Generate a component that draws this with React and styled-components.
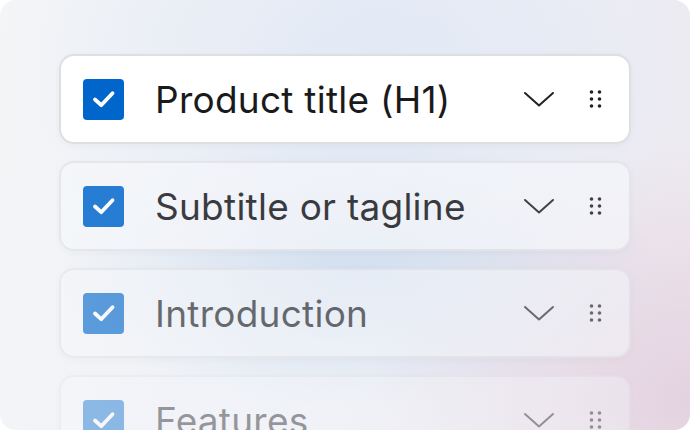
import React from "react";
import styled, { createGlobalStyle } from "styled-components";

const Global = createGlobalStyle`
  html, body { margin: 0; padding: 0; background: #ffffff; }
  body { font-family: Inter, "Noto Sans", sans-serif; }
`;

const Frame = styled.div`
  width: 690px;
  height: 430px;
  border-radius: 16px;
  overflow: hidden;
  box-sizing: border-box;
  padding: 54px 59px 0 59px;
  background:
    radial-gradient(ellipse 300px 140px at 360px 270px, rgba(190, 210, 235, 0.55), rgba(190, 210, 235, 0) 100%),
    radial-gradient(ellipse 320px 260px at 690px 400px, rgba(226, 208, 222, 0.9), rgba(226, 208, 222, 0) 100%),
    radial-gradient(ellipse 380px 240px at 380px 60px, rgba(226, 233, 245, 1), rgba(226, 233, 245, 0) 100%),
    linear-gradient(100deg, #f4f5f7 0%, #edf0f6 50%, #efeaf0 100%);
`;

const List = styled.div`
  display: flex;
  flex-direction: column;
  gap: 17px;
`;

const Row = styled.div`
  height: 90px;
  box-sizing: border-box;
  display: flex;
  align-items: center;
  padding: 0 24px 0 22px;
  border-radius: 15px;
  border: 2px solid ${(p) => (p.$first ? "#dedfe2" : "rgba(225,226,230,0.9)")};
  background: ${(p) => (p.$first ? "#ffffff" : "rgba(246,247,250,0.85)")};
  box-shadow: 0 2px 6px rgba(30, 40, 60, 0.04);
  opacity: ${(p) => p.$fade};
  flex-shrink: 0;
`;

const Box = styled.div`
  width: 41px;
  height: 41px;
  border-radius: 4px;
  background: #0066cc;
  display: flex;
  align-items: center;
  justify-content: center;
  flex-shrink: 0;
`;

const Label = styled.div`
  margin-left: 31px;
  flex: 1;
  font-family: Inter, "Noto Sans", sans-serif;
  font-size: 37px;
  font-weight: 400;
  letter-spacing: 0.25px;
  color: #1a1a1c;
  white-space: nowrap;
  line-height: 1;
`;

const Chevron = styled.svg`
  width: 32px;
  height: 18px;
  margin-right: 34px;
  flex-shrink: 0;
`;

const Grip = styled.svg`
  width: 13px;
  height: 18px;
  margin-right: 3px;
  flex-shrink: 0;
`;

const items = [
  { label: "Product title (H1)", fade: 1 },
  { label: "Subtitle or tagline", fade: 0.84 },
  { label: "Introduction", fade: 0.62 },
  { label: "Features", fade: 0.42 },
];

export default function App() {
  return (
    <>
      <Global />
      <Frame>
        <List>
          {items.map((it, i) => (
            <Row key={it.label} $fade={it.fade} $first={i === 0}>
              <Box>
                <svg width="28" height="28" viewBox="0 0 28 28">
                  <path d="M5 14.5 L11.2 20.2 L22.5 8.2" fill="none" stroke="#fff" strokeWidth="3.8" strokeLinecap="round" strokeLinejoin="round" />
                </svg>
              </Box>
              <Label>{it.label}</Label>
              <Chevron viewBox="0 0 32 18">
                <path d="M2 3 L16 15.5 L30 3" fill="none" stroke="#222" strokeWidth="2" strokeLinecap="round" strokeLinejoin="round" />
              </Chevron>
              <Grip viewBox="0 0 13 18">
                {[2, 9, 16].map((y) => (
                  <React.Fragment key={y}>
                    <circle cx="2.5" cy={y} r="1.8" fill="#222" />
                    <circle cx="10.5" cy={y} r="1.8" fill="#222" />
                  </React.Fragment>
                ))}
              </Grip>
            </Row>
          ))}
        </List>
      </Frame>
    </>
  );
}
